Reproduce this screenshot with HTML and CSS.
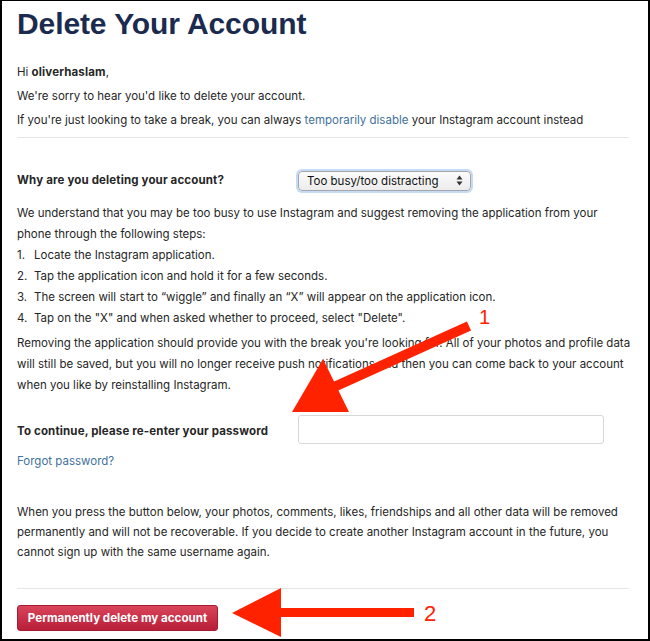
FILE: index.html
```
<!DOCTYPE html>
<html>
<head>
<meta charset="utf-8">
<title>Delete Your Account</title>
<link rel="stylesheet" href="styles.css">
</head>
<body>
<div class="page">
  <h1 class="title">Delete Your Account</h1>
  <div class="intro">
    <p>Hi <b>oliverhaslam</b>,</p>
    <p>We're sorry to hear you'd like to delete your account.</p>
    <p>If you're just looking to take a break, you can always <a class="link" href="#">temporarily disable</a> your Instagram account instead</p>
  </div>
  <hr class="rule">
  <div class="field-row reason">
    <label class="field-label">Why are you deleting your account?</label>
    <div class="select">
      <span>Too busy/too distracting</span>
      <svg class="select-arrows" width="7" height="11" viewBox="0 0 7 11"><polygon points="0.5,4.5 3.5,0.5 6.5,4.5" /><polygon points="0.5,6.5 3.5,10.5 6.5,6.5" /></svg>
    </div>
  </div>
  <p class="advice">We understand that you may be too busy to use Instagram and suggest removing the application from your<br>phone through the following steps:</p>
  <ol class="steps">
    <li>Locate the Instagram application.</li>
    <li>Tap the application icon and hold it for a few seconds.</li>
    <li>The screen will start to “wiggle” and finally an “X” will appear on the application icon.</li>
    <li>Tap on the "X" and when asked whether to proceed, select "Delete".</li>
  </ol>
  <p class="note">Removing the application should provide you with the break you're looking for. All of your photos and profile data<br>will still be saved, but you will no longer receive push notifications and then you can come back to your account<br>when you like by reinstalling Instagram.</p>
  <div class="field-row password">
    <label class="field-label password-label">To continue, please re-enter your password</label>
    <input class="input" type="password">
  </div>
  <a class="link forgot" href="#">Forgot password?</a>
  <p class="warning">When you press the button below, your photos, comments, likes, friendships and all other data will be removed<br>permanently and will not be recoverable. If you decide to create another Instagram account in the future, you<br>cannot sign up with the same username again.</p>
  <hr class="rule rule-bottom">
  <button class="danger" type="button">Permanently delete my account</button>

  <svg class="marks" width="650" height="641" viewBox="0 0 650 641">
    <line x1="469" y1="326" x2="334" y2="387" stroke="#ff2200" stroke-width="10" />
    <polygon points="292,412 349,412 323,359" fill="#ff2200" />
    <text x="479" y="324" class="mark-num mark-one">1</text>
    <rect x="278" y="608" width="136" height="9" fill="#ff2200" />
    <polygon points="232,613 281,588 281,637" fill="#ff2200" />
    <text x="424" y="621" class="mark-num">2</text>
  </svg>
</div>
</body>
</html>
```
FILE: styles.css
```
html, body {
  margin: 0;
  padding: 0;
  background: #fff;
}

.page {
  position: relative;
  width: 650px;
  height: 641px;
  box-sizing: border-box;
  border: 2px solid #000;
  border-top-width: 1px;
  padding: 5px 19px 0 15px;
  overflow: hidden;
  font-family: Inter, "Liberation Sans", Arial, sans-serif;
  font-size: 11.5px;
  line-height: 21px;
  color: #262626;
}

.page p {
  white-space: nowrap;
}

.page b,
.field-label {
  font-weight: bold;
  letter-spacing: 0.15px;
}

.title {
  margin: 0;
  font-family: "Liberation Sans", Arial, sans-serif;
  font-weight: bold;
  font-size: 30px;
  line-height: 36px;
  letter-spacing: -0.1px;
  color: #1b2b4f;
}

.intro {
  margin-top: 18px;
}

.intro p {
  margin: 0;
  line-height: 24px;
}

.link {
  color: #3f729b;
  text-decoration: none;
}

.rule {
  border: 0;
  height: 1px;
  background: #e6e6e6;
  margin: 5px 0 0;
}

.field-row {
  display: grid;
  grid-template-columns: 281px auto;
  align-items: center;
  justify-items: start;
}

.reason {
  margin-top: 32px;
}

.select {
  box-sizing: border-box;
  width: 173px;
  height: 20px;
  display: flex;
  align-items: center;
  justify-content: space-between;
  padding: 0 7px 0 8px;
  border: 1px solid #a6a6a6;
  border-radius: 4px;
  background: linear-gradient(#fbfbfb, #ececec);
  box-shadow: 0 0 0 2px #c3dbf5;
  line-height: 18px;
  color: #111;
}

.select-arrows polygon {
  fill: #333;
}

.advice {
  margin: 12px 0 0;
}

.steps {
  margin: 0;
  padding: 0;
  list-style: none;
  counter-reset: step;
}

.steps li {
  display: flex;
  counter-increment: step;
}

.steps li::before {
  content: counter(step) ".";
  width: 17px;
  flex: none;
}

.note {
  margin: 4px 0 0;
}

.password {
  margin-top: 19px;
}

.password-label {
  padding-top: 3px;
}

.input {
  box-sizing: border-box;
  width: 306px;
  height: 29px;
  margin: 0;
  border: 1px solid #d7d7d7;
  border-radius: 3px;
  background: #fff;
}

.forgot {
  display: block;
  margin-top: 7px;
}

.warning {
  margin: 30px 0 0;
  line-height: 20px;
}

.rule-bottom {
  margin-top: 26px;
}

.danger {
  display: block;
  box-sizing: border-box;
  margin-top: 16px;
  width: 201px;
  height: 26px;
  padding: 0;
  border: 1px solid #a51c32;
  border-radius: 3px;
  background: linear-gradient(#d9455b, #b81f38);
  color: #fff;
  font-family: Inter, "Liberation Sans", Arial, sans-serif;
  font-weight: bold;
  font-size: 11.6px;
  line-height: 24px;
  text-align: center;
}

.marks {
  position: absolute;
  left: -2px;
  top: -1px;
  pointer-events: none;
}

.mark-num {
  font-family: "Liberation Sans", Arial, sans-serif;
  font-size: 22px;
  fill: #ff2200;
}

.mark-one {
  font-size: 20px;
}
```
